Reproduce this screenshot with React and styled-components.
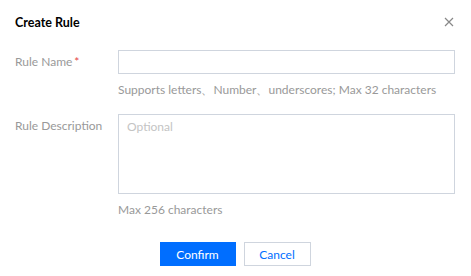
import React from 'react';
import styled, { createGlobalStyle } from 'styled-components';

const GlobalStyle = createGlobalStyle`
  * { box-sizing: border-box; }
  body {
    margin: 0;
    background: #fff;
    font-family: Lato, "Open Sans", sans-serif;
    font-size: 12px;
    color: #000;
  }
`;

const Dialog = styled.div`
  width: 471px;
  height: 276px;
  padding: 12px 16px 0 15px;
  background: #fff;
`;

const Header = styled.div`
  display: flex;
  justify-content: space-between;
  align-items: center;
  height: 20px;
  h2 {
    margin: 0;
    font-size: 12.5px;
    font-weight: 700;
    color: #000;
  }
`;

const Close = styled.button`
  border: 0;
  background: none;
  padding: 0;
  width: 12px;
  height: 12px;
  display: flex;
  align-items: center;
  justify-content: center;
  cursor: pointer;
`;

const Form = styled.div`
  margin-top: 18px;
  display: flex;
  flex-direction: column;
  gap: 14px;
`;

const Row = styled.div`
  display: grid;
  grid-template-columns: 103px 1fr;
`;

const Label = styled.label`
  color: #999;
  line-height: 24px;
  height: 24px;
  white-space: nowrap;
  span {
    color: #e54545;
    margin-left: 2px;
  }
`;

const Input = styled.input`
  display: block;
  width: 337px;
  height: 24px;
  border: 1px solid #cfd5de;
  outline: none;
  padding: 0 8px;
  font: inherit;
`;

const TextArea = styled.textarea`
  display: block;
  width: 337px;
  height: 80px;
  border: 1px solid #cfd5de;
  outline: none;
  padding: 4px 8px;
  font: inherit;
  resize: none;
  &::placeholder { color: #c4c4c4; }
`;

const Help = styled.div`
  color: #999;
  margin-top: 6px;
  line-height: 20px;
  white-space: nowrap;
`;

const Footer = styled.div`
  display: flex;
  justify-content: center;
  gap: 8px;
  margin-top: 22px;
`;

const Button = styled.button`
  height: 24px;
  min-width: ${(p) => (p.$primary ? '76px' : '67px')};
  font: inherit;
  border: 1px solid ${(p) => (p.$primary ? '#006eff' : '#cfd5de')};
  background: ${(p) => (p.$primary ? '#006eff' : '#fff')};
  color: ${(p) => (p.$primary ? '#fff' : '#006eff')};
  padding: 0 12px;
  cursor: pointer;
`;

export default function App() {
  return (
    <>
      <GlobalStyle />
      <Dialog>
        <Header>
          <h2>Create Rule</h2>
          <Close aria-label="close">
            <svg width="10" height="10" viewBox="0 0 10 10">
              <path d="M1 1L9 9M9 1L1 9" stroke="#888" strokeWidth="1.2" />
            </svg>
          </Close>
        </Header>
        <Form>
          <Row>
            <Label>Rule Name<span>*</span></Label>
            <div>
              <Input />
              <Help>Supports letters、Number、underscores; Max 32 characters</Help>
            </div>
          </Row>
          <Row>
            <Label>Rule Description</Label>
            <div>
              <TextArea placeholder="Optional" />
              <Help>Max 256 characters</Help>
            </div>
          </Row>
        </Form>
        <Footer>
          <Button $primary>Confirm</Button>
          <Button>Cancel</Button>
        </Footer>
      </Dialog>
    </>
  );
}
